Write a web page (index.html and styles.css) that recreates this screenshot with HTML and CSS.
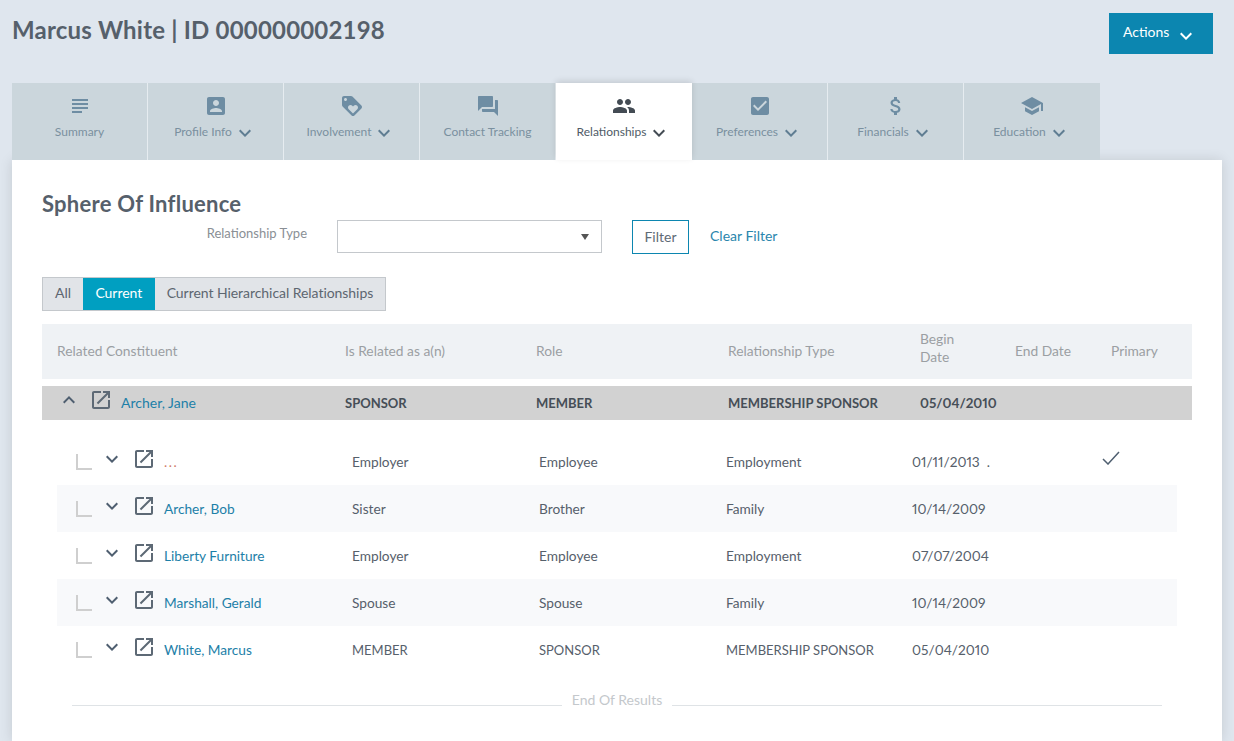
FILE: index.html
```html
<!DOCTYPE html>
<html lang="en">
<head>
<meta charset="UTF-8" />
<title>Marcus White | Relationships</title>
<link rel="stylesheet" href="styles.css">
</head>
<body>
<svg class="defs" width="0" height="0">
  <symbol id="i-down" viewBox="0 0 24 24"><path d="M16.59 8.59L12 13.17 7.41 8.59 6 10l6 6 6-6z"/></symbol>
  <symbol id="i-up" viewBox="0 0 24 24"><path d="M12 8l-6 6 1.41 1.41L12 10.83l4.59 4.58L18 14z"/></symbol>
  <symbol id="i-open" viewBox="0 0 24 24"><path d="M19 19H5V5h7V3H5c-1.11 0-2 .9-2 2v14c0 1.1.89 2 2 2h14c1.1 0 2-.9 2-2v-7h-2v7zM14 3v2h3.59l-9.83 9.83 1.41 1.41L19 6.41V10h2V3h-7z"/></symbol>
  <symbol id="i-summary" viewBox="0 0 24 24"><path d="M14 17H4v2h10v-2zm6-8H4v2h16V9zM4 15h16v-2H4v2zM4 5v2h16V5H4z"/></symbol>
  <symbol id="i-profile" viewBox="0 0 24 24"><path d="M3 5v14c0 1.1.89 2 2 2h14c1.1 0 2-.9 2-2V5c0-1.1-.9-2-2-2H5c-1.11 0-2 .9-2 2zm12 4c0 1.66-1.34 3-3 3s-3-1.34-3-3 1.34-3 3-3 3 1.34 3 3zm-9 8c0-2 4-3.1 6-3.1s6 1.1 6 3.1v1H6v-1z"/></symbol>
  <symbol id="i-tag" viewBox="0 0 24 24"><path d="M21.41 11.58l-9-9C12.05 2.22 11.55 2 11 2H4c-1.1 0-2 .9-2 2v7c0 .55.22 1.05.59 1.42l9 9c.36.36.86.58 1.41.58.55 0 1.05-.22 1.41-.59l7-7c.37-.36.59-.86.59-1.41 0-.55-.23-1.06-.59-1.42zM5.5 7C4.67 7 4 6.33 4 5.5S4.67 4 5.5 4 7 4.67 7 5.5 6.33 7 5.5 7zm11.77 8.27L13 19.54l-4.27-4.27C8.28 14.81 8 14.19 8 13.5c0-1.38 1.12-2.5 2.5-2.5.69 0 1.32.28 1.77.74l.73.72.73-.73c.45-.45 1.08-.73 1.77-.73 1.38 0 2.5 1.12 2.5 2.5 0 .69-.28 1.32-.73 1.77z"/></symbol>
  <symbol id="i-forum" viewBox="0 0 24 24"><path d="M21 6h-2v9H6v2c0 .55.45 1 1 1h11l4 4V7c0-.55-.45-1-1-1zm-4 6V3c0-.55-.45-1-1-1H3c-.55 0-1 .45-1 1v14l4-4h10c.55 0 1-.45 1-1z"/></symbol>
  <symbol id="i-people" viewBox="0 0 24 24"><path d="M16 11c1.66 0 2.99-1.34 2.99-3S17.66 5 16 5c-1.66 0-3 1.34-3 3s1.34 3 3 3zm-8 0c1.66 0 2.99-1.34 2.99-3S9.66 5 8 5C6.34 5 5 6.34 5 8s1.34 3 3 3zm0 2c-2.33 0-7 1.17-7 3.5V19h14v-2.5c0-2.33-4.67-3.5-7-3.5zm8 0c-.29 0-.62.02-.97.05 1.16.84 1.97 1.97 1.97 3.45V19h6v-2.5c0-2.33-4.67-3.5-7-3.5z"/></symbol>
  <symbol id="i-checkbox" viewBox="0 0 24 24"><path d="M19 3H5c-1.11 0-2 .9-2 2v14c0 1.1.89 2 2 2h14c1.11 0 2-.9 2-2V5c0-1.1-.89-2-2-2zm-9 14l-5-5 1.41-1.41L10 14.17l7.59-7.59L19 8l-9 9z"/></symbol>
  <symbol id="i-money" viewBox="0 0 24 24"><path d="M11.8 10.9c-2.27-.59-3-1.2-3-2.15 0-1.09 1.01-1.85 2.7-1.85 1.78 0 2.44.85 2.5 2.1h2.21c-.07-1.72-1.12-3.3-3.21-3.81V3h-3v2.16c-1.94.42-3.5 1.68-3.5 3.61 0 2.31 1.91 3.46 4.7 4.13 2.5.6 3 1.48 3 2.41 0 .69-.49 1.79-2.7 1.79-2.06 0-2.87-.92-2.98-2.1h-2.2c.12 2.19 1.76 3.42 3.68 3.83V21h3v-2.15c1.95-.37 3.5-1.5 3.5-3.55 0-2.84-2.43-3.81-4.7-4.4z"/></symbol>
  <symbol id="i-school" viewBox="0 0 24 24"><path d="M5 13.18v4L12 21l7-3.82v-4L12 17l-7-3.82zM12 3L1 9l11 6 9-4.91V17h2V9L12 3z"/></symbol>
</svg>

<header class="top">
  <h1 class="page-title">Marcus White | ID 000000002198</h1>
  <button class="actions-btn"><span class="actions-text">Actions</span><svg class="chev-lg"><use href="#i-down"/></svg></button>
</header>

<nav class="tabs">
  <a class="tab"><svg class="tab-icon"><use href="#i-summary"/></svg><span class="tab-label">Summary</span></a>
  <a class="tab"><svg class="tab-icon"><use href="#i-profile"/></svg><span class="tab-label">Profile Info <svg class="chev"><use href="#i-down"/></svg></span></a>
  <a class="tab"><svg class="tab-icon"><use href="#i-tag"/></svg><span class="tab-label">Involvement <svg class="chev"><use href="#i-down"/></svg></span></a>
  <a class="tab"><svg class="tab-icon"><use href="#i-forum"/></svg><span class="tab-label">Contact Tracking</span></a>
  <a class="tab active"><svg class="tab-icon"><use href="#i-people"/></svg><span class="tab-label">Relationships <svg class="chev"><use href="#i-down"/></svg></span></a>
  <a class="tab"><svg class="tab-icon"><use href="#i-checkbox"/></svg><span class="tab-label">Preferences <svg class="chev"><use href="#i-down"/></svg></span></a>
  <a class="tab"><svg class="tab-icon"><use href="#i-money"/></svg><span class="tab-label">Financials <svg class="chev"><use href="#i-down"/></svg></span></a>
  <a class="tab"><svg class="tab-icon"><use href="#i-school"/></svg><span class="tab-label">Education <svg class="chev"><use href="#i-down"/></svg></span></a>
</nav>

<main class="card">
  <h2 class="card-title">Sphere Of Influence</h2>

  <div class="filter-row">
    <label class="filter-label">Relationship Type</label>
    <div class="select"><span class="select-arrow"></span></div>
    <button class="filter-btn">Filter</button>
    <a class="clear-link">Clear Filter</a>
  </div>

  <div class="seg">
    <span class="seg-item">All</span>
    <span class="seg-item on">Current</span>
    <span class="seg-item">Current Hierarchical Relationships</span>
  </div>

  <div class="thead">
    <span>Related Constituent</span>
    <span>Is Related as a(n)</span>
    <span>Role</span>
    <span>Relationship Type</span>
    <span class="two-line">Begin<br>Date</span>
    <span>End Date</span>
    <span>Primary</span>
  </div>

  <div class="group">
    <span class="name-cell">
      <svg class="chev-row"><use href="#i-up"/></svg>
      <svg class="open"><use href="#i-open"/></svg>
      <a class="link">Archer, Jane</a>
    </span>
    <span class="caps">SPONSOR</span>
    <span class="caps">MEMBER</span>
    <span class="caps">MEMBERSHIP SPONSOR</span>
    <span class="date">05/04/2010</span>
  </div>

  <div class="rows">
    <div class="row">
      <span class="name-cell"><i class="corner"></i><svg class="chev-row"><use href="#i-down"/></svg><svg class="open"><use href="#i-open"/></svg><a class="link red">...</a></span>
      <span>Employer</span><span>Employee</span><span>Employment</span><span class="date">01/11/2013 &nbsp;.</span>
      <span><svg class="tick" viewBox="0 0 18 14"><path d="M1 8l5 5L17 1" fill="none" stroke="#4f5f70" stroke-width="1.5"/></svg></span>
    </div>
    <div class="row">
      <span class="name-cell"><i class="corner"></i><svg class="chev-row"><use href="#i-down"/></svg><svg class="open"><use href="#i-open"/></svg><a class="link">Archer, Bob</a></span>
      <span>Sister</span><span>Brother</span><span>Family</span><span class="date">10/14/2009</span><span></span>
    </div>
    <div class="row">
      <span class="name-cell"><i class="corner"></i><svg class="chev-row"><use href="#i-down"/></svg><svg class="open"><use href="#i-open"/></svg><a class="link">Liberty Furniture</a></span>
      <span>Employer</span><span>Employee</span><span>Employment</span><span class="date">07/07/2004</span><span></span>
    </div>
    <div class="row">
      <span class="name-cell"><i class="corner"></i><svg class="chev-row"><use href="#i-down"/></svg><svg class="open"><use href="#i-open"/></svg><a class="link">Marshall, Gerald</a></span>
      <span>Spouse</span><span>Spouse</span><span>Family</span><span class="date">10/14/2009</span><span></span>
    </div>
    <div class="row">
      <span class="name-cell"><i class="corner"></i><svg class="chev-row"><use href="#i-down"/></svg><svg class="open"><use href="#i-open"/></svg><a class="link">White, Marcus</a></span>
      <span class="caps">MEMBER</span><span class="caps">SPONSOR</span><span class="caps">MEMBERSHIP SPONSOR</span><span class="date">05/04/2010</span><span></span>
    </div>
  </div>

  <div class="end-results"><span>End Of Results</span></div>
</main>
</body>
</html>
```

FILE: styles.css
```css
* {
  box-sizing: border-box;
}
html, body {
  height: 741px;
  overflow: hidden;
}
body {
  margin: 0;
  background-color: #dfe6ee;
  color: #4f5b67;
  font-family: Lato, sans-serif;
  font-size: 14px;
}
svg {
  fill: currentColor;
}
.defs {
  display: block;
  height: 0;
}

/* header */
.top {
  display: flex;
  justify-content: space-between;
  align-items: flex-start;
  height: 83px;
  padding: 13px 21px 0 12px;
}
.page-title {
  margin: 0;
  font-size: 24px;
  font-weight: 700;
  line-height: 34px;
  letter-spacing: 0.2px;
  color: #56606b;
}
.actions-btn {
  display: flex;
  align-items: center;
  width: 104px;
  height: 41px;
  padding: 0 0 0 14px;
  border: 0;
  background-color: #0c86b0;
  color: #fff;
  font: 14px Lato, sans-serif;
}
.actions-text {
  margin-top: -4px;
}
.chev-lg {
  width: 24px;
  height: 24px;
  margin: 4px 0 0 5px;
}

/* tabs */
.tabs {
  display: flex;
  margin-left: 12px;
  height: 77px;
}
.tab {
  display: flex;
  flex-direction: column;
  align-items: center;
  width: 136px;
  padding-top: 11px;
  background-color: #cbd6dc;
  border-right: 1px solid #e6ecf0;
  color: #7a909f;
  font-size: 12px;
}
.tab:last-child {
  border-right: 0;
}
.tab-icon {
  width: 24px;
  height: 24px;
  color: #6e8da3;
}
.tab-label {
  display: flex;
  align-items: center;
  gap: 1px;
  height: 20px;
  margin-top: 3px;
}
.chev {
  width: 24px;
  height: 24px;
  margin-top: 4px;
  color: #5f7d92;
}
.tab.active {
  position: relative;
  background-color: #fff;
  border-right: 0;
  color: #4f5b67;
  box-shadow: 0 -2px 6px rgba(0, 0, 0, 0.12);
}
.tab.active .tab-icon,
.tab.active .chev {
  color: #444c54;
}

/* card */
.card {
  height: 581px;
  width: 1210px;
  margin-left: 12px;
  padding: 30px 30px 0;
  background-color: #fff;
  box-shadow: 0 0 12px rgba(0, 0, 0, 0.12);
}
.card-title {
  margin: 0;
  font-size: 22px;
  font-weight: 700;
  line-height: 28px;
  letter-spacing: 0.25px;
  color: #56606b;
}
.filter-row {
  display: flex;
  align-items: flex-start;
  height: 34px;
  margin-top: 2px;
}
.filter-label {
  width: 295px;
  padding-right: 30px;
  text-align: right;
  font-size: 13px;
  line-height: 26px;
  color: #8a8f95;
}
.select {
  position: relative;
  width: 265px;
  height: 33px;
  border: 1px solid #c4c8cc;
}
.select-arrow {
  position: absolute;
  right: 12px;
  top: 13px;
  border-left: 4px solid transparent;
  border-right: 4px solid transparent;
  border-top: 6px solid #555;
}
.filter-btn {
  width: 57px;
  height: 34px;
  margin-left: 30px;
  padding: 0 0 2px;
  border: 1px solid #0c86b0;
  background-color: #fff;
  color: #5f6b76;
  font: 14px Lato, sans-serif;
}
.clear-link {
  margin-left: 21px;
  line-height: 31px;
  color: #2a86ad;
}

/* segmented control */
.seg {
  display: inline-flex;
  height: 34px;
  margin-top: 23px;
  border: 1px solid #c4c8cc;
  background-color: #e1e4e8;
  letter-spacing: -0.05px;
}
.seg-item {
  padding: 0 12px;
  line-height: 30px;
  color: #5d6670;
}
.seg-item.on {
  background-color: #009fc1;
  color: #fff;
  padding: 0 12.5px;
}

/* table */
.thead,
.group {
  display: grid;
  grid-template-columns: 288px 191px 192px 192px 95px 96px 1fr;
  padding-left: 15px;
  align-items: center;
}
.thead {
  height: 55px;
  margin-top: 13px;
  padding-bottom: 2px;
  background-color: #eff2f5;
  color: #9b9fa3;
  font-size: 13.8px;
  line-height: 18px;
}
.two-line {
  margin-top: -6px;
}
.group {
  height: 34px;
  margin-top: 7px;
  padding-bottom: 1px;
  background-color: #d2d2d2;
  color: #464e57;
  font-weight: 700;
}
.group .link {
  font-weight: 400;
}
.group .date {
  font-size: 13.4px;
}
.name-cell {
  display: flex;
  align-items: center;
}
.link {
  margin-left: 8px;
  color: #1d80a8;
}
.link.red {
  color: #cf7a68;
  letter-spacing: 1.5px;
  font-weight: 400;
}
.caps {
  font-size: 13px;
}
.date {
  font-variant-numeric: proportional-nums;
}
.rows {
  margin: 18px 15px 0;
}
.row {
  display: grid;
  grid-template-columns: 295px 187px 187px 186px 190px 1fr;
  align-items: center;
  height: 47px;
  color: #56606b;
  font-size: 13.7px;
}
.row:nth-child(even) {
  background-color: #f8f9fb;
}
.corner {
  display: block;
  width: 16px;
  height: 16px;
  margin: 1px 8px 0 19px;
  border-left: 2px solid #cfcfcf;
  border-bottom: 2px solid #cfcfcf;
}
.chev-row {
  width: 24px;
  height: 24px;
  margin-top: -5px;
  color: #4f5f70;
}
.open {
  width: 24px;
  height: 24px;
  margin: -5px 0 0 8px;
  color: #5d6975;
}
.tick {
  display: block;
  width: 18px;
  height: 14px;
  margin-top: -8px;
}

/* end marker */
.end-results {
  display: flex;
  align-items: center;
  gap: 10px;
  margin: 18px 30px 0;
  color: #c4c8cc;
  font-size: 14px;
}
.end-results span {
  flex: none;
}
.end-results::before,
.end-results::after {
  content: "";
  flex: 1;
  height: 1px;
  margin-top: 11px;
  background-color: #dfe3e6;
}
```
